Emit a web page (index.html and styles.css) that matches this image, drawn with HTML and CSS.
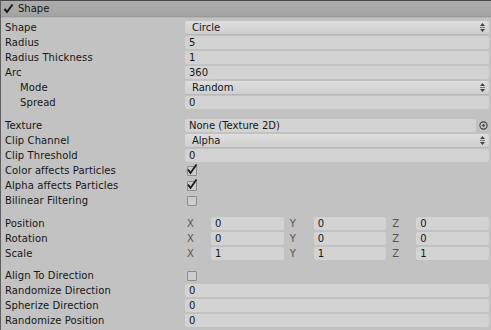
FILE: index.html
```html
<!DOCTYPE html>
<html lang="en">
<head>
    <meta charset="UTF-8">
    <title>Shape Module</title>
    <link rel="stylesheet" href="styles.css">
</head>
<body>
<div class="module">
    <!-- Module header -->
    <div class="module-header">
        <svg class="toggle" width="11" height="11" viewBox="0 0 11 11"><path d="M1.5 6 L4 9 L9.5 1.5" fill="none" stroke="#1a1a1a" stroke-width="2"/></svg>
        <span>Shape</span>
    </div>

    <div class="module-body">
        <div class="row"><span class="label">Shape</span><div class="field popup">Circle<svg class="arrows" width="5" height="9" viewBox="0 0 5 9"><path d="M2.5 0 L5 3 H0 Z M2.5 9 L5 6 H0 Z" fill="#444"/><rect x="0" y="4" width="5" height="1" fill="#777"/></svg></div></div>
        <div class="row"><span class="label">Radius</span><div class="field">5</div></div>
        <div class="row"><span class="label">Radius Thickness</span><div class="field">1</div></div>
        <div class="row"><span class="label">Arc</span><div class="field">360</div></div>
        <div class="row"><span class="label sub">Mode</span><div class="field popup">Random<svg class="arrows" width="5" height="9" viewBox="0 0 5 9"><path d="M2.5 0 L5 3 H0 Z M2.5 9 L5 6 H0 Z" fill="#444"/><rect x="0" y="4" width="5" height="1" fill="#777"/></svg></div></div>
        <div class="row"><span class="label sub">Spread</span><div class="field">0</div></div>

        <div class="spacer"></div>

        <div class="row"><span class="label">Texture</span>
            <div class="object-field">
                <div class="field">None (Texture 2D)</div>
                <svg class="picker" width="9" height="9" viewBox="0 0 9 9"><circle cx="4.5" cy="4.5" r="3.6" fill="none" stroke="#444" stroke-width="1.1"/><circle cx="4.5" cy="4.5" r="1.3" fill="#444"/></svg>
            </div>
        </div>
        <div class="row"><span class="label">Clip Channel</span><div class="field popup">Alpha<svg class="arrows" width="5" height="9" viewBox="0 0 5 9"><path d="M2.5 0 L5 3 H0 Z M2.5 9 L5 6 H0 Z" fill="#444"/><rect x="0" y="4" width="5" height="1" fill="#777"/></svg></div></div>
        <div class="row"><span class="label">Clip Threshold</span><div class="field">0</div></div>
        <div class="row"><span class="label">Color affects Particles</span><span class="checkbox checked"><svg width="12" height="12" viewBox="0 0 12 12"><path d="M2 6.5 L4.5 10 L10.5 1.5" fill="none" stroke="#1a1a1a" stroke-width="1.8"/></svg></span></div>
        <div class="row"><span class="label">Alpha affects Particles</span><span class="checkbox checked"><svg width="12" height="12" viewBox="0 0 12 12"><path d="M2 6.5 L4.5 10 L10.5 1.5" fill="none" stroke="#1a1a1a" stroke-width="1.8"/></svg></span></div>
        <div class="row"><span class="label">Bilinear Filtering</span><span class="checkbox"></span></div>

        <div class="spacer"></div>

        <div class="row"><span class="label">Position</span>
            <div class="vector">
                <div class="axis"><span>X</span><div class="field">0</div></div>
                <div class="axis"><span>Y</span><div class="field">0</div></div>
                <div class="axis"><span>Z</span><div class="field">0</div></div>
            </div>
        </div>
        <div class="row"><span class="label">Rotation</span>
            <div class="vector">
                <div class="axis"><span>X</span><div class="field">0</div></div>
                <div class="axis"><span>Y</span><div class="field">0</div></div>
                <div class="axis"><span>Z</span><div class="field">0</div></div>
            </div>
        </div>
        <div class="row"><span class="label">Scale</span>
            <div class="vector">
                <div class="axis"><span>X</span><div class="field">1</div></div>
                <div class="axis"><span>Y</span><div class="field">1</div></div>
                <div class="axis"><span>Z</span><div class="field">1</div></div>
            </div>
        </div>

        <div class="spacer short"></div>

        <div class="row"><span class="label">Align To Direction</span><span class="checkbox"></span></div>
        <div class="row"><span class="label">Randomize Direction</span><div class="field">0</div></div>
        <div class="row"><span class="label">Spherize Direction</span><div class="field">0</div></div>
        <div class="row"><span class="label">Randomize Position</span><div class="field">0</div></div>
    </div>
</div>
</body>
</html>
```

FILE: styles.css
```css
/* Reset */
* {
    margin: 0;
    padding: 0;
    box-sizing: border-box;
}

html, body {
    height: 100%;
    background-color: #c2c2c2;
    font-family: "DejaVu Sans", Verdana, sans-serif;
    font-size: 10px;
    color: #161616;
    overflow: hidden;
}

.module {
    height: 100%;
    border-top: 1px solid #4a4a4a;
    border-left: 1px solid #5e5e5e;
}

/* Header bar */
.module-header {
    display: flex;
    align-items: center;
    gap: 4px;
    height: 16px;
    padding-left: 2px;
    background: linear-gradient(#acacac, #a4a4a4);
    border-bottom: 1px solid #999;
    box-shadow: 0 1px 0 #b5b5b5;
}

.module-body {
    padding-top: 3px;
}

.row {
    display: grid;
    grid-template-columns: 184px 1fr;
    align-items: center;
    height: 15px;
    padding-right: 2px;
}

.label {
    padding-left: 4px;
    white-space: nowrap;
    letter-spacing: 0.1px;
}

.label.sub {
    padding-left: 19px;
}

.spacer {
    height: 8px;
}

.spacer.short {
    height: 7px;
}

/* Fields */
.field {
    display: flex;
    align-items: center;
    height: 13px;
    padding-left: 4px;
    background-color: #d3d3d3;
    border-radius: 2px;
    white-space: nowrap;
    overflow: hidden;
}

.popup {
    justify-content: space-between;
    padding-left: 7px;
    padding-right: 4px;
    background: linear-gradient(#dedede, #cfcfcf);
    box-shadow: 0 1px 0 #b8b8b8;
}

.object-field {
    display: grid;
    grid-template-columns: 1fr 13px;
    align-items: center;
}

.picker {
    justify-self: end;
    margin-right: 1px;
}

/* Checkboxes */
.checkbox {
    position: relative;
    width: 10px;
    height: 10px;
    margin-left: 2px;
    border: 1px solid #8c8c8c;
    border-radius: 1px;
    background-color: #cdcdcd;
}

.checkbox svg {
    position: absolute;
    left: -2px;
    top: -4px;
}

/* Vector3 fields */
.vector {
    display: grid;
    grid-template-columns: repeat(3, 1fr);
    gap: 4px;
}

.axis {
    display: grid;
    grid-template-columns: 26px 1fr;
    align-items: center;
}

.axis span {
    padding-left: 2px;
    color: #555;
}
```
